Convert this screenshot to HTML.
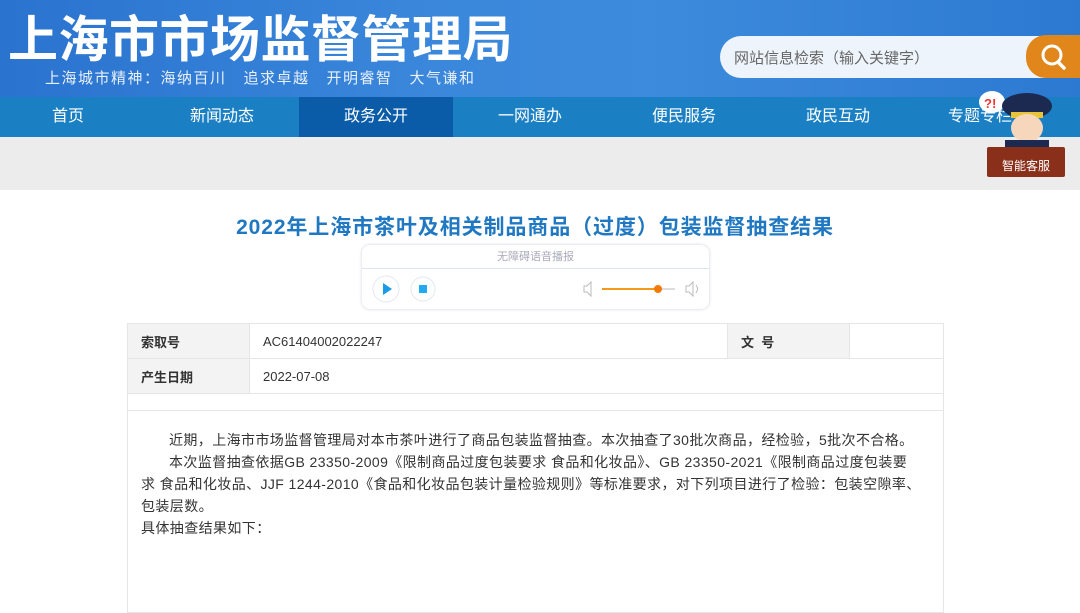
<!DOCTYPE html>
<html><head><meta charset="utf-8"><style>
*{margin:0;padding:0;box-sizing:border-box}
body{width:1080px;height:546px;overflow:hidden;background:#fff;font-family:"Liberation Sans","Noto Sans CJK SC",sans-serif;position:relative}
.hdr{position:absolute;left:0;top:0;width:1080px;height:97px;background:linear-gradient(90deg,#2a73cf 0%,#3a87db 40%,#3d8bdc 60%,#2c79d2 100%)}
.t1{position:absolute;left:8px;top:0px;font-size:50px;font-weight:bold;color:#fff;letter-spacing:0.5px;white-space:nowrap}
.t2{position:absolute;left:45px;top:67px;font-size:15px;color:#e8f0fb;white-space:nowrap;letter-spacing:1.5px}
.search{position:absolute;left:720px;top:36px;width:360px;height:42px;background:#eef4fb;border-radius:21px 0 0 21px}
.search span{position:absolute;left:14px;top:11px;font-size:15px;color:#666}
.sbtn{position:absolute;left:1026px;top:35px;width:54px;height:43px;background:#e0861a;border-radius:20px 0 0 20px}
.nav{position:absolute;left:0;top:97px;width:1080px;height:40px;background:#1b80c3}
.nav div{position:absolute;top:0;height:40px;line-height:40px;font-size:16px;color:#fff;text-align:center;width:154px}
.gray{position:absolute;left:0;top:137px;width:1080px;height:53px;background:#ececec}
h1{position:absolute;left:0;width:1070px;top:211px;text-align:center;font-size:21px;color:#1f78c1;font-weight:bold;letter-spacing:0.9px}
.audio{position:absolute;left:362px;top:245px;width:347px;height:64px;border-radius:8px;box-shadow:0 0 3px #ccd;background:#fff}
.audio .h{height:24px;line-height:24px;text-align:center;font-size:11px;color:#aab;border-bottom:1px solid #d8e6f3}
table{position:absolute;left:127px;top:323px;width:817px;border-collapse:collapse;font-size:13px;color:#333}
td{border:1px solid #e6e6e6;height:35px;padding-left:13px}
td.l{background:#f3f3f3;font-weight:bold}
.body{position:absolute;left:127px;top:393px;width:817px;height:220px;border:1px solid #e6e6e6;border-top:none;padding:36px 13px 0 13px;font-size:14px;color:#333;line-height:22px;letter-spacing:0.4px}
.body .sep{position:absolute;left:0;right:0;top:17px;border-top:1px solid #e6e6e6}
.body p{text-indent:2em}
</style></head><body>
<div class="hdr">
<div class="t1">上海市市场监督管理局</div>
<div class="t2">上海城市精神：海纳百川 &nbsp;&nbsp;追求卓越 &nbsp;&nbsp;开明睿智 &nbsp;&nbsp;大气谦和</div>
<div class="search"><span>网站信息检索（输入关键字）</span></div>
<div class="sbtn"><svg width="54" height="43"><circle cx="26" cy="20" r="9" fill="none" stroke="#fff" stroke-width="3"/><line x1="32" y1="27" x2="38" y2="33" stroke="#fff" stroke-width="3.5" stroke-linecap="round"/></svg></div>
</div>
<div class="nav">
<div style="left:-9px">首页</div><div style="left:145px">新闻动态</div>
<div style="left:299px;background:#0a5ba8">政务公开</div>
<div style="left:453px">一网通办</div><div style="left:607px">便民服务</div><div style="left:761px">政民互动</div><div style="left:915px;width:110px;padding-left:20px">专题专栏</div>
</div>
<div class="gray"></div>
<svg style="position:absolute;left:975px;top:82px" width="90" height="96">
<ellipse cx="17" cy="20" rx="13" ry="11" fill="#fff"/><text x="9" y="26" font-size="13" fill="#e33" font-weight="bold">?!</text>
<ellipse cx="52" cy="24" rx="25" ry="13" fill="#1c2a52"/><rect x="36" y="30" width="32" height="6" fill="#e8c43a"/>
<ellipse cx="52" cy="46" rx="16" ry="14" fill="#f6d7bc"/>
<rect x="30" y="58" width="44" height="22" fill="#1c2a52"/>
<rect x="12" y="65" width="78" height="30" rx="2" fill="#8a2f1a"/><text x="51" y="88" font-size="12" fill="#fff" text-anchor="middle">智能客服</text>
</svg>
<h1>2022年上海市茶叶及相关制品商品（过度）包装监督抽查结果</h1>
<div class="audio"><div class="h">无障碍语音播报</div>
<svg width="347" height="40" style="position:absolute;left:0;top:24px">
<circle cx="24" cy="20" r="13" fill="#fff" stroke="#e3e8f0"/><path d="M21 14 L30 20 L21 26Z" fill="#1a9be8"/>
<circle cx="61" cy="20" r="12" fill="#fff" stroke="#e3e8f0"/><rect x="57" y="16" width="8" height="8" fill="#22aaf0"/>
<path d="M222 17h3l4-4v14l-4-4h-3z" fill="none" stroke="#bbb"/>
<line x1="240" y1="20" x2="296" y2="20" stroke="#f39a1a" stroke-width="2"/><line x1="296" y1="20" x2="313" y2="20" stroke="#ddd" stroke-width="2"/><circle cx="296" cy="20" r="4" fill="#f37a0a"/>
<path d="M324 17h3l4-4v14l-4-4h-3z M334 16q3 4 0 8" fill="none" stroke="#bbb"/>
</svg></div>
<table>
<tr><td class="l" style="width:122px">索取号</td><td style="width:478px">AC61404002022247</td><td class="l" style="width:122px">文 &nbsp;号</td><td></td></tr>
<tr><td class="l">产生日期</td><td colspan="3">2022-07-08</td></tr>
</table>
<div class="body"><div class="sep"></div>
<p>近期，上海市市场监督管理局对本市茶叶进行了商品包装监督抽查。本次抽查了30批次商品，经检验，5批次不合格。</p>
<p>本次监督抽查依据GB 23350-2009《限制商品过度包装要求 食品和化妆品》、GB 23350-2021《限制商品过度包装要<br>求 食品和化妆品、JJF 1244-2010《食品和化妆品包装计量检验规则》等标准要求，对下列项目进行了检验：包装空隙率、<br>包装层数。</p>
<div>具体抽查结果如下：</div>
</div>
</body></html>
